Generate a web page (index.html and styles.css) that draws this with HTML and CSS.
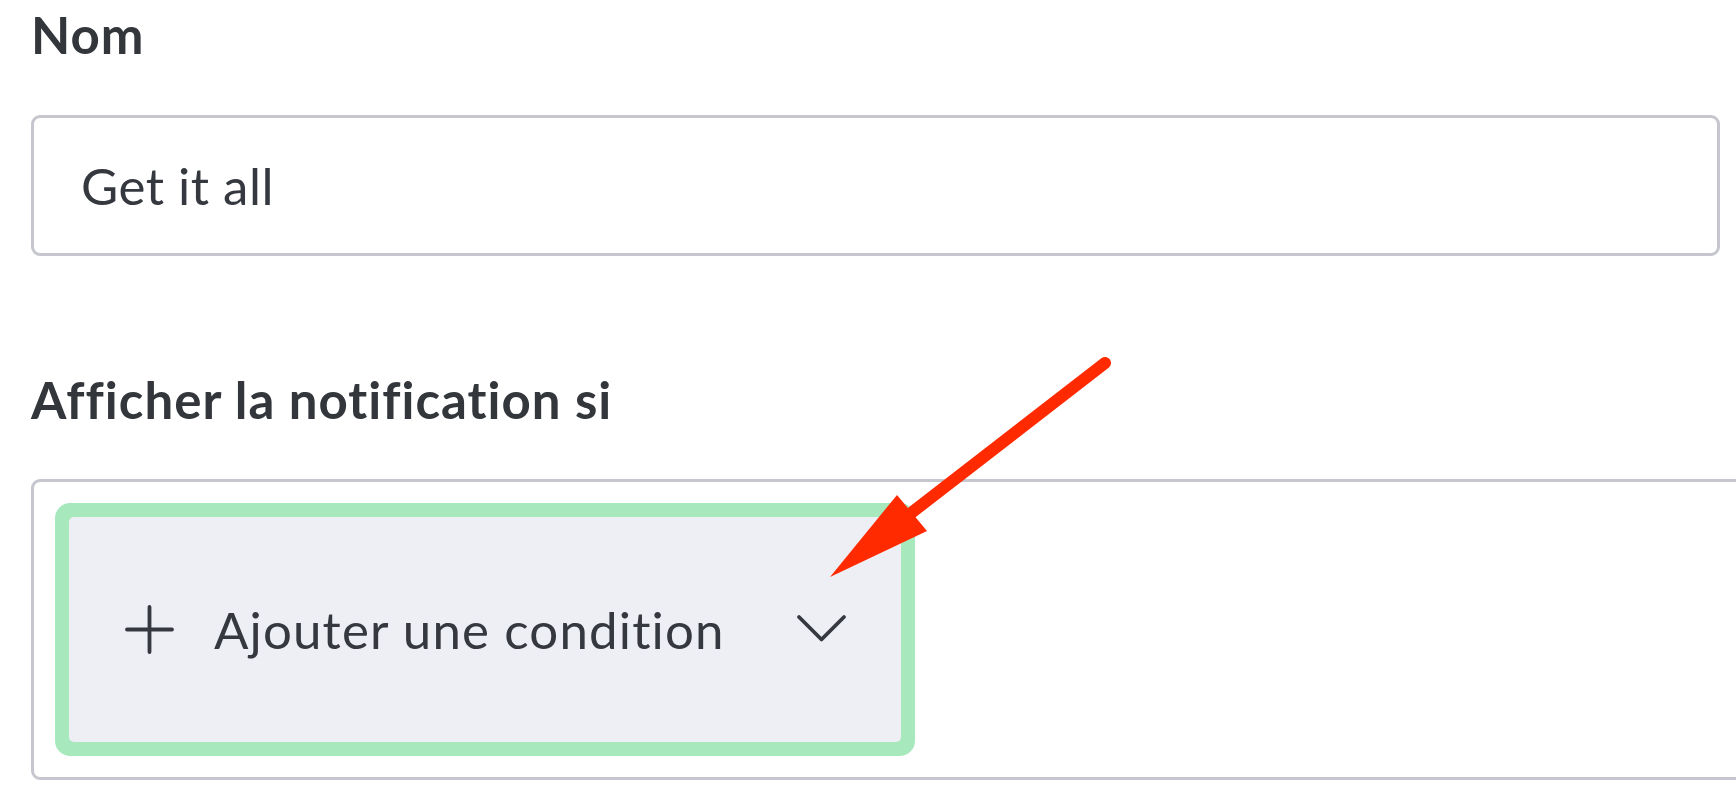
FILE: index.html
```html
<!DOCTYPE html>
<html lang="fr">
<head>
    <meta charset="UTF-8">
    <meta name="viewport" content="width=device-width, initial-scale=1.0">
    <title>Notification</title>
    <link rel="stylesheet" href="styles.css">
</head>
<body>
    <main class="form">
        <label class="field-label" for="name">Nom</label>
        <div class="text-input" id="name">Get it all</div>

        <div class="field-label field-label--conditions">Afficher la notification si</div>
        <div class="conditions">
            <button class="add-condition" type="button">
                <svg class="icon-plus" width="49" height="49" viewBox="0 0 49 49">
                    <path d="M24.5 2v45M2 24.5h45" fill="none" stroke="currentColor" stroke-width="3.8" stroke-linecap="round"/>
                </svg>
                <span class="add-condition__text">Ajouter une condition</span>
                <svg class="icon-chevron" width="51" height="29" viewBox="0 0 51 29">
                    <path d="M3 3l22.5 22.5L48 3" fill="none" stroke="currentColor" stroke-width="3.8" stroke-linecap="round" stroke-linejoin="round"/>
                </svg>
            </button>
        </div>
    </main>

    <svg class="annotation" width="1736" height="796" viewBox="0 0 1736 796">
        <line x1="1105" y1="363" x2="906" y2="517" stroke="#ff2a00" stroke-width="12" stroke-linecap="round"/>
        <polygon points="830,577 897,495 927,531" fill="#ff2a00"/>
    </svg>
</body>
</html>
```

FILE: styles.css
```css
:root {
    --text-color: #35383e;
    --border-color: #c6c7ce;
    --button-bg: #eeeff4;
    --focus-ring: #a8e8bd;
}

* {
    margin: 0;
    padding: 0;
    box-sizing: border-box;
}

html, body {
    overflow: hidden;
}

body {
    font-family: 'Lato', 'Liberation Sans', sans-serif;
    background-color: #fff;
    color: var(--text-color);
    width: 1736px;
    height: 796px;
    position: relative;
}

.form {
    padding: 5px 0 0 31px;
    display: flex;
    flex-direction: column;
    align-items: flex-start;
}

.field-label {
    display: block;
    font-size: 51px;
    line-height: 60px;
    font-weight: 700;
    letter-spacing: 1px;
    color: #33363b;
}

.text-input {
    margin-top: 50px;
    width: 1689px;
    height: 141px;
    border: 3px solid var(--border-color);
    border-radius: 9px;
    padding-left: 47px;
    display: flex;
    align-items: center;
    font-size: 51px;
    letter-spacing: 0.5px;
}

.field-label--conditions {
    margin-top: 114px;
}

.conditions {
    margin-top: 49px;
    width: 1760px;
    border: 3px solid var(--border-color);
    border-radius: 9px;
    padding: 35px;
}

.add-condition {
    width: 832px;
    height: 225px;
    display: flex;
    align-items: center;
    padding: 0 54px 0 56px;
    background-color: var(--button-bg);
    border: none;
    border-radius: 5px;
    box-shadow: 0 0 0 14px var(--focus-ring);
    font-family: inherit;
    font-size: 51px;
    letter-spacing: 1.15px;
    color: var(--text-color);
    cursor: pointer;
}

.add-condition__text {
    margin-left: 40px;
}

.icon-chevron {
    margin-left: auto;
    margin-top: -2px;
}

.annotation {
    position: absolute;
    top: 0;
    left: 0;
    pointer-events: none;
}
```
